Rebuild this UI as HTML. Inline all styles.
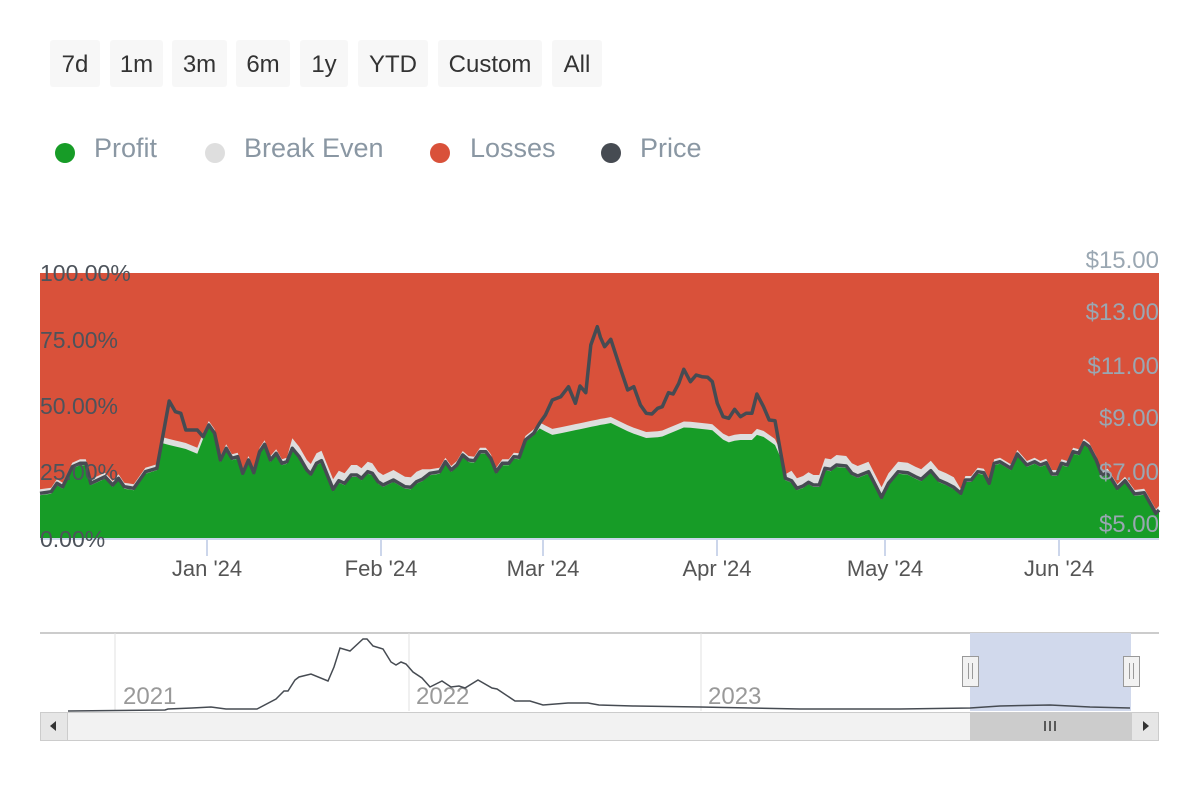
<!DOCTYPE html>
<html><head><meta charset="utf-8"><style>
body{margin:0;width:1200px;height:800px;background:#fff;font-family:"Liberation Sans",sans-serif;overflow:hidden;position:relative}
.btn{position:absolute;top:40px;height:47px;background:#f7f7f7;border-radius:3px;font-size:24px;color:#333;line-height:50px;text-align:center}
.lg{position:absolute;top:133px;font-size:27px;color:#8a97a3}
.dot{position:absolute;top:143px;width:20px;height:20px;border-radius:50%}
</style></head><body>
<div class="btn" style="left:50px;width:50px">7d</div>
<div class="btn" style="left:110px;width:53px">1m</div>
<div class="btn" style="left:172px;width:55px">3m</div>
<div class="btn" style="left:236px;width:54px">6m</div>
<div class="btn" style="left:300px;width:48px">1y</div>
<div class="btn" style="left:358px;width:70px">YTD</div>
<div class="btn" style="left:438px;width:104px">Custom</div>
<div class="btn" style="left:552px;width:50px">All</div>
<div class="dot" style="left:55px;background:#179c27"></div><div class="lg" style="left:94px">Profit</div>
<div class="dot" style="left:205px;background:#dedede"></div><div class="lg" style="left:244px">Break Even</div>
<div class="dot" style="left:430px;background:#d9513a"></div><div class="lg" style="left:470px">Losses</div>
<div class="dot" style="left:601px;background:#464b52"></div><div class="lg" style="left:640px">Price</div>
<svg id="s" width="1200" height="800" style="position:absolute;left:0;top:0" font-family="Liberation Sans, sans-serif"></svg>
<script>
var z1=[[25,730],[55,725],[70,700],[85,710],[110,650],[130,640],[145,640],[158,700],[195,680],[215,705],[230,685],[245,710],[270,715],[300,665],[330,655],[345,560],[362,453],[378,485],[392,490],[405,540],[435,540],[450,560],[465,525],[480,550],[495,630],[510,595],[525,625],[540,620],[553,670],[568,630],[582,668],[597,605],[610,583],[625,630],[640,610],[655,640],[668,635],[682,595],[700,620],[720,660],[730,672],[745,640],[758,632],[788,718],[803,692],[818,700],[835,675],[850,675],[862,685],[878,665],[890,670],[905,695],[918,705],[945,690],[975,710],[990,712],[1005,695],[1020,688],[1040,670],[1065,665],[1080,635],[1095,660],[1110,645],[1125,615],[1140,630],[1155,632],[1170,605],[1185,605],[1198,625],[1212,665],[1228,640],[1245,640],[1258,620],[1272,622],[1288,570],[1310,550],[1325,520],[1340,495],[1358,450],[1380,440],[1400,410],[1418,460],[1430,408],[1445,428],[1458,285],[1475,230]];
var z2=[[1,262],[12,290],[28,268],[50,345],[72,420],[88,410],[105,465],[120,490],[135,492],[150,475],[162,470],[178,428],[190,432],[205,400],[218,358],[235,395],[250,375],[265,380],[280,382],[292,395],[305,460],[320,500],[335,505],[350,478],[365,500],[380,490],[395,490],[408,432],[425,470],[440,510],[455,512],[470,610],[482,685],[498,692],[512,715],[528,708],[542,697],[555,705],[570,705],[585,655],[600,658],[615,645],[640,648],[655,670],[670,678],[698,665],[718,710],[732,742],[750,700],[775,665],[800,668],[820,680],[835,688],[860,662],[880,690],[900,700],[920,712],[938,730],[950,690],[965,690],[982,665],[998,668],[1012,700],[1025,640],[1040,635],[1068,655],[1085,612],[1110,645],[1130,635],[1145,645],[1160,638],[1175,672],[1188,672],[1200,640],[1215,645],[1230,605],[1245,610],[1258,578],[1272,590],[1290,630],[1305,675],[1320,668],[1345,715],[1365,692],[1390,732],[1415,728],[1445,790],[1462,780]];
var P=[];z1.forEach(function(p){P.push([30+p[0]/2.6,250+p[1]/3])});z2.forEach(function(p){P.push([600+p[0]/2.6,250+p[1]/3])});
P[0][0]=40;P[P.length-1][0]=1159;
var cap=[[40,0],[145,0],[146,437],[151,440],[165,444],[190,450],[200,455],[204,0],[455,0],[459,445],[480,432],[497,431],[512,430],[522,424],[537,427],[552,435],[600,425],[611,423],[629,432],[646,438],[661,437],[685,427],[692,428],[712,430],[727,443],[737,440],[754,440],[758,433],[775,445],[783,463],[786,0],[1159,0]];
function ip(a,x){for(var i=1;i<a.length;i++){if(x<=a[i][0]){var t=(x-a[i-1][0])/((a[i][0]-a[i-1][0])||1);return a[i-1][1]+t*(a[i][1]-a[i-1][1]);}}return a[a.length-1][1];}
function gap(x){return (x>290&&x<425)||(x>790&&x<960)?12:6;}
var G=[],B=[];P.forEach(function(p){var c=ip(cap,p[0]);var g=Math.max(p[1]+2,c>0?c:0);G.push([p[0],g]);B.push([p[0],g-gap(p[0])]);});
function pts(a){return a.map(function(p){return p[0].toFixed(1)+','+p[1].toFixed(1)}).join(' ');}
var h='';
h+='<rect x="40" y="273" width="1119" height="265" fill="#d9513a"/>';
h+='<polygon fill="#dedede" points="40,538 '+pts(B)+' 1159,538"/>';
h+='<polygon fill="#179c27" points="40,538 '+pts(G)+' 1159,538"/>';
h+='<polyline fill="none" stroke="#464b52" stroke-width="3.5" stroke-linejoin="round" points="'+pts(P)+'"/>';
h+='<line x1="40" y1="539" x2="1159" y2="539" stroke="#ccd6eb" stroke-width="2"/>';
[207,381,543,717,885,1059].forEach(function(x){h+='<line x1="'+x+'" y1="538" x2="'+x+'" y2="556" stroke="#ccd6eb" stroke-width="2"/>';});
var xl=[[207,"Jan '24"],[381,"Feb '24"],[543,"Mar '24"],[717,"Apr '24"],[885,"May '24"],[1059,"Jun '24"]];
xl.forEach(function(l){h+='<text x="'+l[0]+'" y="576" font-size="22" fill="#555" text-anchor="middle">'+l[1]+'</text>';});
[["100.00%",281],["75.00%",348],["50.00%",414],["25.00%",480],["0.00%",547]].forEach(function(l){h+='<text x="40" y="'+l[1]+'" font-size="23" fill="#4d535b">'+l[0]+'</text>';});
[["$15.00",268],["$13.00",320],["$11.00",374],["$9.00",426],["$7.00",480],["$5.00",532]].forEach(function(l){h+='<text x="1159" y="'+l[1]+'" font-size="24" fill="#9aa7b2" text-anchor="end">'+l[0]+'</text>';});
h+='<line x1="40" y1="633" x2="1159" y2="633" stroke="#ccc" stroke-width="2"/>';
[115,409,701,995].forEach(function(x){h+='<line x1="'+x+'" y1="633" x2="'+x+'" y2="711" stroke="#e0e0e0" stroke-width="1"/>';});
[[123,"2021"],[416,"2022"],[708,"2023"],[1002,"2024"]].forEach(function(l){h+='<text x="'+l[0]+'" y="704" font-size="24" fill="#999">'+l[1]+'</text>';});
var N=[[68,711],[165,710],[168,709],[192,708],[211,707],[226,709],[257,709],[276,699],[284,691],[288,691],[295,680],[299,677],[311,674],[328,681],[334,667],[340,648],[350,651],[363,639],[367,639],[373,646],[383,649],[391,662],[396,665],[401,662],[406,664],[413,672],[422,678],[430,687],[442,681],[451,687],[459,686],[465,688],[478,680],[492,688],[497,689],[515,701],[530,701],[543,705],[568,703],[588,703],[599,705],[633,706],[700,707],[800,709],[900,709],[970,708],[1000,706],[1050,705],[1090,707],[1130,708]];
h+='<rect x="970" y="633" width="161" height="78" fill="#d1d9ec"/>';
h+='<polyline fill="none" stroke="#464b52" stroke-width="1.5" points="'+pts(N)+'"/>';
h+='<rect x="40.5" y="712.5" width="1118" height="28" fill="#f2f2f2" stroke="#ccc"/>';
h+='<rect x="40.5" y="712.5" width="27" height="28" fill="#e6e6e6" stroke="#ccc"/>';
h+='<rect x="1131.5" y="712.5" width="27" height="28" fill="#e6e6e6" stroke="#ccc"/>';
h+='<rect x="970" y="712" width="161" height="29" fill="#ccc"/>';
h+='<path d="M56 721 L50 726 L56 731Z" fill="#333"/><path d="M1143 721 L1149 726 L1143 731Z" fill="#333"/>';
h+='<path d="M1045 721v10M1050 721v10M1055 721v10" stroke="#333" stroke-width="1.5"/>';
[962,1123].forEach(function(x){h+='<rect x="'+(x+.5)+'" y="656.5" width="16" height="30" fill="#f2f2f2" stroke="#999"/><path d="M'+(x+6.5)+' 663v16M'+(x+10.5)+' 663v16" stroke="#999"/>';});
document.getElementById('s').innerHTML=h;
</script>
</body></html>
